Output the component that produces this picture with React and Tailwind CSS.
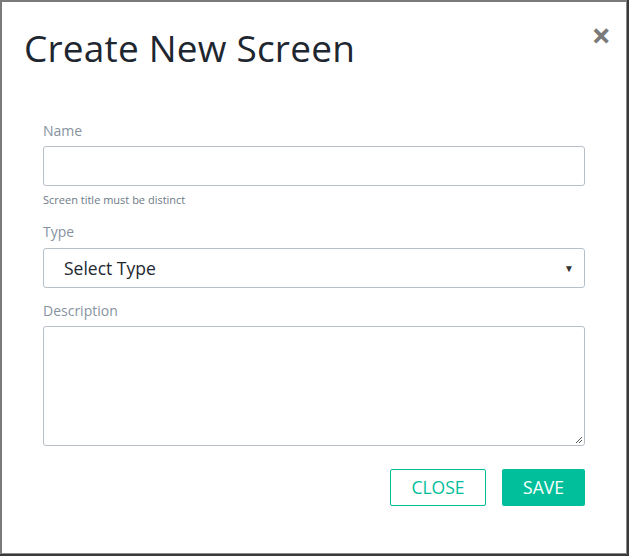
export default function App() {
  return (
    <div className="w-[629px] h-[556px] bg-[#3a3a3a] pr-[2px] pb-[2px]" style={{ fontFamily: '"Open Sans", sans-serif' }}>
      <div className="relative w-full h-full bg-white border-l-2 border-t-2 border-r border-b border-[#7b7b7b] border-r-[#8a8a8a] border-b-[#8a8a8a]">
        <button className="absolute right-[15px] top-[16px] text-[#7a7a7a] text-[34px] leading-none font-bold">×</button>
        <div className="pl-[22px] pt-[22px]">
          <h1 className="text-[37px] leading-[48px] text-[#1e2630] font-normal tracking-[0.2px]">Create New Screen</h1>
        </div>
        <div className="pl-[41px] pr-[41px] pt-[49px]">
          <label className="block text-[14px] leading-[20px] text-[#8793a0]">Name</label>
          <div className="mt-[5px] h-[40px] border border-[#b7c0c9] rounded-[3px]" />
          <div className="mt-[6px] text-[11px] leading-[16px] text-[#6e7a87]">Screen title must be distinct</div>
          <label className="block mt-[14px] text-[14px] leading-[20px] text-[#8793a0]">Type</label>
          <div className="mt-[6px] h-[40px] border border-[#b7c0c9] rounded-[3px] flex items-center pl-[20px] pr-[10px]">
            <span className="flex-1 text-[17.5px] text-[#222831]">Select Type</span>
            <span className="text-[10px] text-[#333]">▼</span>
          </div>
          <label className="block mt-[13px] text-[14px] leading-[20px] text-[#8793a0]">Description</label>
          <div className="relative mt-[5px] h-[120px] border border-[#b7c0c9] rounded-[3px]">
            <svg className="absolute right-[1px] bottom-[1px]" width="9" height="9" viewBox="0 0 9 9">
              <path d="M8 2L2 8M8 5L5 8" stroke="#555" strokeWidth="1" />
            </svg>
          </div>
          <div className="flex justify-end gap-[16px] mt-[23px]">
            <button className="w-[96px] h-[37px] border border-[#00bf9a] text-[#00bf9a] text-[17.5px] rounded-[2px]">CLOSE</button>
            <button className="w-[83px] h-[37px] bg-[#00bf9a] text-white text-[17.5px] rounded-[2px]">SAVE</button>
          </div>
        </div>
      </div>
    </div>
  );
}
